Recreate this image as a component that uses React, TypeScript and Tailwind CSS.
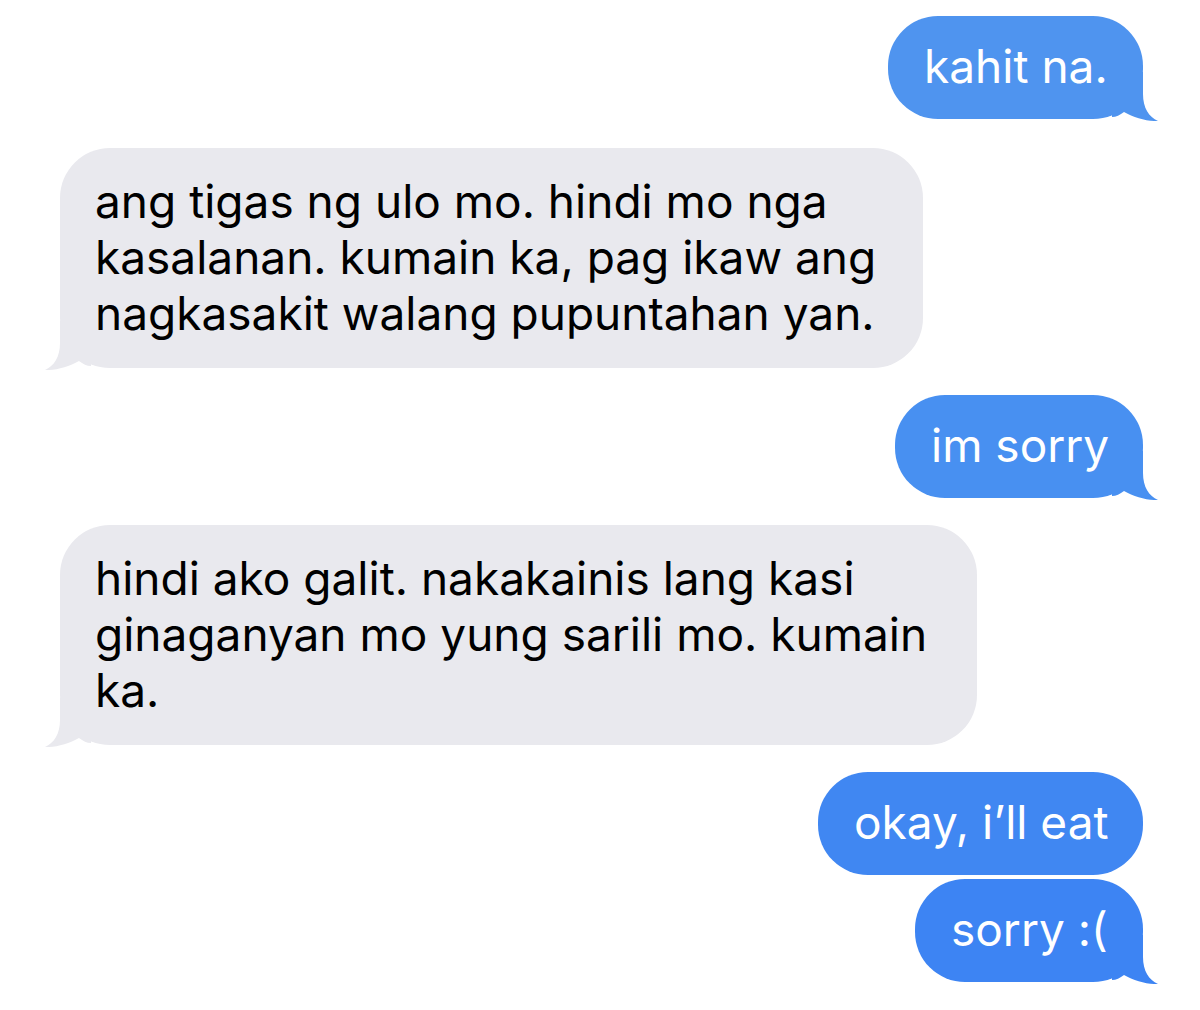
const font = { fontFamily: 'Inter, "Noto Sans", sans-serif' };

function Tail({ side, className }: { side: 'left' | 'right'; className: string }) {
  return (
    <svg
      viewBox="0 0 46 49"
      className={`absolute bottom-[-2px] h-[49px] w-[46px] ${side === 'right' ? 'right-[-15px]' : 'left-[-15px] -scale-x-100'} ${className}`}
    >
      <path
        d="M0 0 H31 V22 C31 36 37 45 46 49 C36 49.5 22 46 12 40 C8 43 4 45 0 45 Z"
        fill="currentColor"
      />
    </svg>
  );
}

function Sent({
  text,
  width,
  bg,
  tailColor,
  tail = true,
  mt,
}: {
  text: string;
  width: string;
  bg: string;
  tailColor: string;
  tail?: boolean;
  mt: string;
}) {
  return (
    <div className={`flex justify-end ${mt}`}>
      <div
        className={`relative ${width} ${bg} h-[103px] rounded-[50px] pl-[36px] text-[46px] leading-[101px] text-white`}
      >
        <span className="relative z-10 whitespace-nowrap">{text}</span>
        {tail && <Tail side="right" className={tailColor} />}
      </div>
    </div>
  );
}

function Received({ lines, width, mt }: { lines: string[]; width: string; mt: string }) {
  return (
    <div className={`flex justify-start ${mt}`}>
      <div
        className={`relative ${width} rounded-[50px] bg-[#e9e9ee] pb-[27px] pt-[25px] pl-[35px] text-[46px] leading-[56px] text-black`}
      >
        <div className="relative z-10">
          {lines.map((l, i) => (
            <div key={i} className="whitespace-nowrap">
              {l}
            </div>
          ))}
        </div>
        <Tail side="left" className="text-[#e9e9ee]" />
      </div>
    </div>
  );
}

export default function App() {
  return (
    <div className="h-[1010px] w-[1200px] overflow-hidden bg-white pl-[60px] pr-[57px] pt-[16px]" style={font}>
      <Sent text="kahit na." width="w-[255px]" bg="bg-[#4f94ef]" tailColor="text-[#4f94ef]" mt="mt-0" />
      <Received
        mt="mt-[29px]"
        width="w-[863px]"
        lines={[
          'ang tigas ng ulo mo. hindi mo nga',
          'kasalanan. kumain ka, pag ikaw ang',
          'nagkasakit walang pupuntahan yan.',
        ]}
      />
      <Sent text="im sorry" width="w-[248px]" bg="bg-[#4890f1]" tailColor="text-[#4890f1]" mt="mt-[27px]" />
      <Received
        mt="mt-[27px]"
        width="w-[917px]"
        lines={[
          'hindi ako galit. nakakainis lang kasi',
          'ginaganyan mo yung sarili mo. kumain',
          'ka.',
        ]}
      />
      <Sent text="okay, i’ll eat" width="w-[325px]" bg="bg-[#4087f2]" tailColor="text-[#4087f2]" tail={false} mt="mt-[27px]" />
      <Sent text="sorry :(" width="w-[228px]" bg="bg-[#3d84f3]" tailColor="text-[#3d84f3]" mt="mt-[4px]" />
    </div>
  );
}
